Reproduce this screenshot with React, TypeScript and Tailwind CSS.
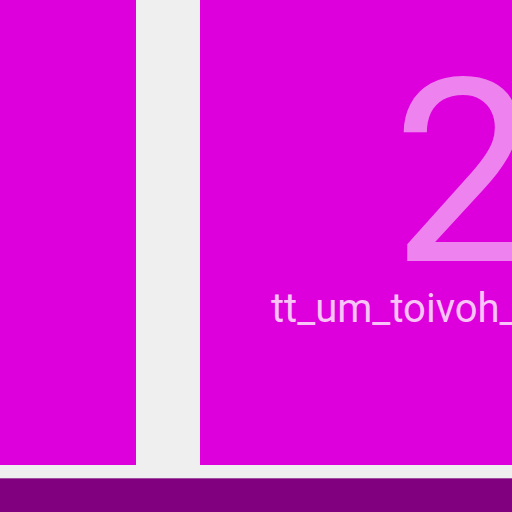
export default function App() {
  return (
    <div className="flex h-[512px] w-[512px] flex-col overflow-hidden bg-[#efefef] font-['Roboto',sans-serif]">
      <div className="flex h-[465px] shrink-0 gap-[64px]">
        <div className="w-[136px] shrink-0 bg-[#dd00dd]" />
        <div className="flex-1 overflow-hidden bg-[#dd00dd] pt-[46px]">
          <div className="ml-[192px] whitespace-nowrap text-[256px] leading-[256px] text-[#ee82ee]">
            2
          </div>
          <div className="-mt-[13px] ml-[71px] whitespace-nowrap text-[40px] leading-none text-[#f8c4f8]">
            tt_um_toivoh_
          </div>
        </div>
      </div>
      <div className="h-[13px] shrink-0" />
      <div className="flex-1 border-t border-[#a04ca0] bg-[#800080]" />
    </div>
  );
}
